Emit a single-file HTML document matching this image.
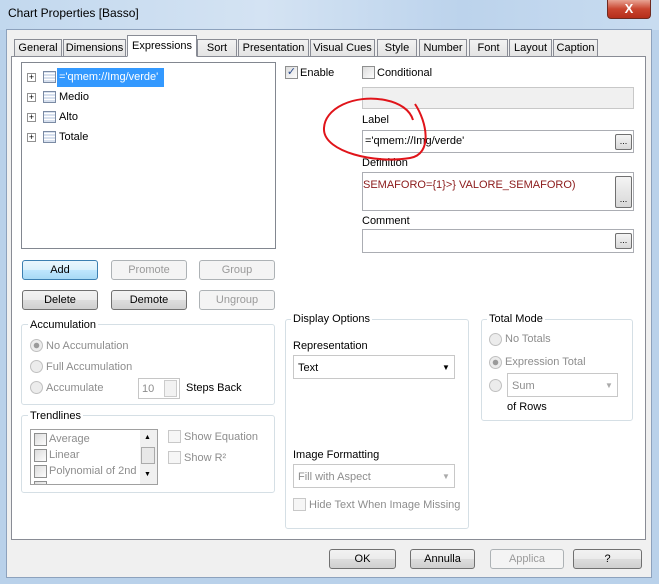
<!DOCTYPE html>
<html><head><meta charset="utf-8"><style>
*{box-sizing:border-box}
body{margin:0;width:659px;height:584px;overflow:hidden;font-family:"Liberation Sans",sans-serif;font-size:11px;color:#000;background:#b9d1ea;position:relative}
.a{position:absolute}
.title{left:0;top:0;width:659px;height:30px;background:linear-gradient(90deg,#c2d8ee 0%,#d4e3f3 40%,#bcd3ec 70%,#c8dcf0 100%)}
.close{left:607px;top:0;width:44px;height:19px;background:linear-gradient(#e8a494,#c9452f 50%,#b52e1b);border:1px solid #6e2a20;border-top:none;border-radius:0 0 4px 4px;color:#fff;text-align:center;font-weight:bold;font-size:13px;line-height:17px}
.body{left:6px;top:29px;width:646px;height:549px;background:#f0f0f0;border:1px solid #8da2bd}
.panel{left:11px;top:56px;width:635px;height:484px;background:#fff;border:1px solid #898c95}
.tab{top:39px;height:18px;background:linear-gradient(#f2f2f2,#e3e3e3);border:1px solid #898c95;border-bottom:none;text-align:center;line-height:17px;font-size:11px}
.tab.sel{top:35px;height:22px;background:#fff;line-height:20px}
.box{background:#fff;border:1px solid #abadb3}
.btn{height:20px;border:1px solid #707070;border-radius:3px;background:linear-gradient(#f2f2f2 0%,#ebebeb 50%,#dddddd 51%,#cfcfcf 100%);text-align:center;line-height:18px}
.btn.dis{border-color:#adb2b5;background:#f4f4f4;color:#9a9a9a}
.grp{border:1px solid #d5dfe5;border-radius:3px}
.gl{background:#fff;padding:0 2px}
.cb{width:13px;height:13px;border:1px solid #8e8f8f;background:linear-gradient(135deg,#dcdcdc,#fdfdfd)}
.rb{width:13px;height:13px;border:1px solid #c0c0c0;border-radius:50%;background:#ececec}
.dis{color:#8d8d8d}
.dots{width:17px;height:16px;border:1px solid #707070;border-radius:2px;background:linear-gradient(#f4f4f4,#d8d8d8);font-size:9px;text-align:center;line-height:12px}
.tree .pl{width:9px;height:9px;border:1px solid #919191;font-size:9px;line-height:7px;text-align:center;background:#fff}
.tree .ic{width:13px;height:12px;border:1px solid #7b8ba4;background:repeating-linear-gradient(0deg,#d7e0ee 0 2px,#fff 2px 3px)}
</style></head><body>
<div class="a title"></div>
<div class="a" style="left:8px;top:6px;font-size:12px;color:#000">Chart Properties [Basso]</div>
<div class="a close">X</div>
<div class="a body"></div>

<div class="a tab" style="left:14px;width:48px">General</div>
<div class="a tab" style="left:63px;width:63px">Dimensions</div>
<div class="a tab" style="left:197px;width:40px">Sort</div>
<div class="a tab" style="left:238px;width:71px">Presentation</div>
<div class="a tab" style="left:310px;width:65px">Visual Cues</div>
<div class="a tab" style="left:377px;width:40px">Style</div>
<div class="a tab" style="left:419px;width:48px">Number</div>
<div class="a tab" style="left:469px;width:39px">Font</div>
<div class="a tab" style="left:509px;width:43px">Layout</div>
<div class="a tab" style="left:553px;width:45px">Caption</div>
<div class="a panel"></div>
<div class="a tab sel" style="left:127px;width:70px;border-bottom:1px solid #fff;height:22px">Expressions</div>

<!-- tree -->
<div class="a box tree" style="left:21px;top:62px;width:255px;height:187px;border-color:#828790">
  <div class="a" style="left:35px;top:5px;width:107px;height:19px;background:#3399ff"></div>
  <div class="a pl" style="left:5px;top:10px">+</div><div class="a ic" style="left:21px;top:8px"></div><div class="a" style="left:37px;top:8px;color:#fff">='qmem://Img/verde'</div>
  <div class="a pl" style="left:5px;top:30px">+</div><div class="a ic" style="left:21px;top:28px"></div><div class="a" style="left:37px;top:28px">Medio</div>
  <div class="a pl" style="left:5px;top:50px">+</div><div class="a ic" style="left:21px;top:48px"></div><div class="a" style="left:37px;top:48px">Alto</div>
  <div class="a pl" style="left:5px;top:70px">+</div><div class="a ic" style="left:21px;top:68px"></div><div class="a" style="left:37px;top:68px">Totale</div>
</div>

<div class="a btn" style="left:22px;top:260px;width:76px;border-color:#3c7fb1;background:linear-gradient(#eaf6fd,#d9f0fc 50%,#bee6fd 51%,#a7d9f5)">Add</div>
<div class="a btn dis" style="left:111px;top:260px;width:76px">Promote</div>
<div class="a btn dis" style="left:199px;top:260px;width:76px">Group</div>
<div class="a btn" style="left:22px;top:290px;width:76px">Delete</div>
<div class="a btn" style="left:111px;top:290px;width:76px">Demote</div>
<div class="a btn dis" style="left:199px;top:290px;width:76px">Ungroup</div>

<!-- Accumulation -->
<div class="a grp" style="left:21px;top:324px;width:254px;height:81px"></div>
<div class="a gl" style="left:28px;top:319px">Accumulation</div>
<div class="a rb" style="left:30px;top:339px;background:radial-gradient(circle,#9a9a9a 0 2.5px,#ececec 3px)"></div><div class="a dis" style="left:46px;top:340px">No Accumulation</div>
<div class="a rb" style="left:30px;top:360px"></div><div class="a dis" style="left:46px;top:361px">Full Accumulation</div>
<div class="a rb" style="left:30px;top:381px"></div><div class="a dis" style="left:46px;top:382px">Accumulate</div>
<div class="a box" style="left:138px;top:378px;width:42px;height:21px;border-color:#c6c6c6"><span class="a dis" style="left:3px;top:4px">10</span><div class="a" style="left:25px;top:1px;width:13px;height:17px;background:#f2f2f2;border:1px solid #ccc"></div></div>
<div class="a" style="left:186px;top:382px">Steps Back</div>

<!-- Trendlines -->
<div class="a grp" style="left:21px;top:415px;width:254px;height:78px"></div>
<div class="a gl" style="left:28px;top:410px">Trendlines</div>
<div class="a box" style="left:30px;top:429px;width:128px;height:56px;border-color:#a0a0a0;overflow:hidden">
  <div class="a cb" style="left:3px;top:3px"></div><div class="a dis" style="left:18px;top:3px">Average</div>
  <div class="a cb" style="left:3px;top:19px"></div><div class="a dis" style="left:18px;top:19px">Linear</div>
  <div class="a cb" style="left:3px;top:35px"></div><div class="a dis" style="left:18px;top:35px;white-space:nowrap">Polynomial of 2nd d</div>
  <div class="a cb" style="left:3px;top:51px"></div>
  <div class="a" style="left:109px;top:0;width:17px;height:54px;background:#f0f0f0"><div class="a" style="left:1px;top:17px;width:14px;height:17px;border:1px solid #aaa;background:#e8e8e8"></div><div class="a" style="left:4px;top:4px;font-size:7px">▲</div><div class="a" style="left:4px;top:41px;font-size:7px">▼</div></div>
</div>
<div class="a cb" style="left:168px;top:430px;border-color:#c8c8c8;background:#f6f6f6"></div><div class="a dis" style="left:184px;top:431px">Show Equation</div>
<div class="a cb" style="left:168px;top:451px;border-color:#c8c8c8;background:#f6f6f6"></div><div class="a dis" style="left:184px;top:452px">Show R²</div>

<!-- right top -->
<div class="a cb" style="left:285px;top:66px;font-size:11px;line-height:10px;text-align:center;color:#2b4a8b">✓</div><div class="a" style="left:300px;top:67px">Enable</div>
<div class="a cb" style="left:362px;top:66px"></div><div class="a" style="left:377px;top:67px">Conditional</div>
<div class="a box" style="left:362px;top:87px;width:272px;height:22px;background:#f0f0f0;border-color:#c8c8c8"></div>
<div class="a" style="left:362px;top:114px">Label</div>
<div class="a box" style="left:362px;top:130px;width:272px;height:23px"><span class="a" style="left:2px;top:4px">='qmem://Img/verde'</span><div class="a dots" style="left:252px;top:3px">...</div></div>
<div class="a" style="left:362px;top:157px">Definition</div>
<div class="a box" style="left:362px;top:172px;width:272px;height:39px"><span class="a" style="left:0;top:6px;color:#8b1a1a">SEMAFORO={1}&gt;} VALORE_SEMAFORO)</span><div class="a dots" style="left:252px;top:3px;height:32px;line-height:44px">...</div></div>
<div class="a" style="left:362px;top:215px">Comment</div>
<div class="a box" style="left:362px;top:229px;width:272px;height:24px"><div class="a dots" style="left:252px;top:3px">...</div></div>

<svg class="a" style="left:315px;top:88px" width="130" height="80"><path d="M100 16 C 112 34, 118 66, 95 70 C 60 76, 10 64, 9 42 C 8 20, 40 6, 70 12 C 85 15, 95 22, 98 32" fill="none" stroke="#e0141a" stroke-width="2"/></svg>

<!-- Display Options -->
<div class="a grp" style="left:285px;top:319px;width:184px;height:210px"></div>
<div class="a gl" style="left:291px;top:313px">Display Options</div>
<div class="a" style="left:293px;top:340px">Representation</div>
<div class="a box" style="left:293px;top:355px;width:162px;height:24px;border-color:#c8c8c8"><span class="a" style="left:4px;top:6px">Text</span><span class="a" style="left:148px;top:7px;font-size:8px">▼</span></div>
<div class="a" style="left:293px;top:449px">Image Formatting</div>
<div class="a box" style="left:293px;top:464px;width:162px;height:24px;border-color:#c8c8c8"><span class="a dis" style="left:4px;top:6px">Fill with Aspect</span><span class="a dis" style="left:148px;top:7px;font-size:8px;color:#aaa">▼</span></div>
<div class="a cb" style="left:293px;top:498px;border-color:#c8c8c8;background:#f6f6f6"></div><div class="a dis" style="left:309px;top:499px">Hide Text When Image Missing</div>

<!-- Total Mode -->
<div class="a grp" style="left:481px;top:319px;width:152px;height:102px"></div>
<div class="a gl" style="left:487px;top:313px">Total Mode</div>
<div class="a rb" style="left:489px;top:333px"></div><div class="a dis" style="left:505px;top:333px">No Totals</div>
<div class="a rb" style="left:489px;top:356px;background:radial-gradient(circle,#9a9a9a 0 2.5px,#ececec 3px)"></div><div class="a dis" style="left:505px;top:356px">Expression Total</div>
<div class="a rb" style="left:489px;top:379px"></div>
<div class="a box" style="left:507px;top:373px;width:111px;height:24px;border-color:#c8c8c8"><span class="a dis" style="left:4px;top:6px">Sum</span><span class="a" style="left:97px;top:7px;font-size:8px;color:#aaa">▼</span></div>
<div class="a" style="left:507px;top:401px">of Rows</div>

<!-- bottom buttons -->
<div class="a btn" style="left:329px;top:549px;width:67px">OK</div>
<div class="a btn" style="left:410px;top:549px;width:65px">Annulla</div>
<div class="a btn dis" style="left:490px;top:549px;width:74px">Applica</div>
<div class="a btn" style="left:573px;top:549px;width:69px">?</div>
</body></html>
